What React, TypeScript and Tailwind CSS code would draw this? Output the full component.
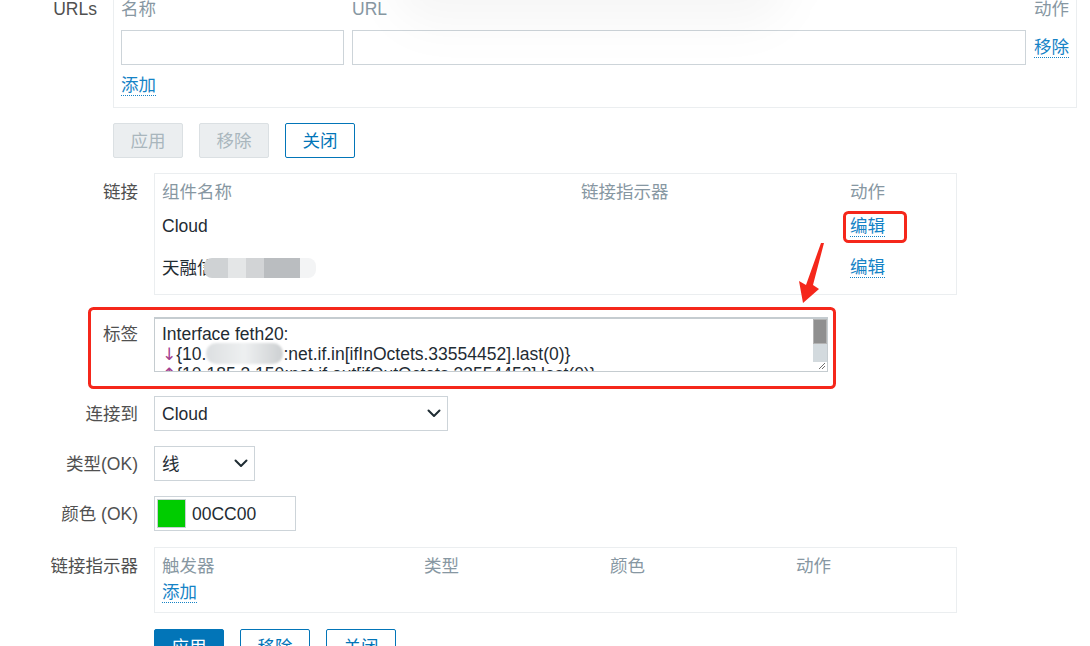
import { FC, ReactElement } from 'react';

const Chevron: FC = (): ReactElement => (
  <svg width="14" height="9" viewBox="0 0 14 9" fill="none">
    <polyline points="1.5,1.5 7,7 12.5,1.5" stroke="#1f2c33" strokeWidth="2" strokeLinecap="round" strokeLinejoin="round" />
  </svg>
);

const Link: FC<{ text: string }> = ({ text }): ReactElement => (
  <span className="inline-block leading-[20px] text-[#1583c6] border-b border-dotted border-[#1583c6]">{text}</span>
);

const Blur: FC = (): ReactElement => (
  <span className="inline-block align-middle w-[77px] h-[21px] -mt-[3px] rounded-[10px] bg-gradient-to-r from-[#dcdfe1] via-[#eef0f1] to-[#cdd0d2] blur-[1px]"></span>
);

export default function App(): ReactElement {
  return (
    <div className="relative w-[1090px] h-[646px] overflow-hidden bg-white text-[17.5px] leading-[20px] text-[#1f2c33] font-['Liberation_Sans','Noto_Sans_CJK_SC',sans-serif]">
      {/* URLs */}
      <div className="flex">
        <div className="w-[97px] shrink-0 text-right leading-[19px] text-[#505050]">URLs</div>
        <div className="ml-4 w-[964px] border-x border-b border-[#ebeef0] pl-[7px] pb-[11px]">
          <div className="grid grid-cols-[223px_674px_auto] gap-x-2 leading-[19px] text-[#8797a2]">
            <span>名称</span>
            <span>URL</span>
            <span>动作</span>
          </div>
          <div className="grid grid-cols-[223px_674px_auto] gap-x-2 mt-[11px] items-center">
            <div className="h-[35px] border border-[#cdd4d9]"></div>
            <div className="h-[35px] border border-[#cdd4d9]"></div>
            <div><Link text="移除" /></div>
          </div>
          <div className="mt-[10px]"><Link text="添加" /></div>
        </div>
      </div>

      <div className="flex gap-4 ml-[113px] mt-[15px]">
        <button className="w-[70px] h-[35px] rounded-[2px] bg-[#ebeef0] border border-[#dbe0e3] text-[#a9b6bd]">应用</button>
        <button className="w-[70px] h-[35px] rounded-[2px] bg-[#ebeef0] border border-[#dbe0e3] text-[#a9b6bd]">移除</button>
        <button className="w-[70px] h-[35px] rounded-[2px] bg-white border border-[#0275b8] text-[#0275b8]">关闭</button>
      </div>

      {/* 链接 */}
      <div className="flex mt-[15px]">
        <div className="w-[138px] shrink-0 text-right text-[#505050] pt-[9px]">链接</div>
        <div className="ml-4 w-[803px] border border-[#ebeef0] pl-[7px] pt-[8px] pb-[16px]">
          <div className="grid grid-cols-[419px_269px_auto] text-[#8797a2]">
            <span>组件名称</span>
            <span>链接指示器</span>
            <span>动作</span>
          </div>
          <div className="grid grid-cols-[419px_269px_auto] mt-[14px]">
            <span>Cloud</span>
            <span></span>
            <span><Link text="编辑" /></span>
          </div>
          <div className="grid grid-cols-[419px_269px_auto] mt-[20px]">
            <span className="flex items-center">
              天融信
              <span className="flex h-[20px] -ml-[11px]">
                <span className="w-[24px] bg-[#cfd2d4] rounded-l-[8px]"></span>
                <span className="w-[18px] bg-[#e4e6e7]"></span>
                <span className="w-[18px] bg-[#d2d4d6]"></span>
                <span className="w-[36px] bg-[#babdc0]"></span>
                <span className="w-[16px] bg-[#f3f4f5] rounded-r-[8px]"></span>
              </span>
            </span>
            <span></span>
            <span><Link text="编辑" /></span>
          </div>
        </div>
      </div>

      {/* 标签 */}
      <div className="flex mt-[22px]">
        <div className="w-[138px] shrink-0 text-right text-[#505050] pt-[7px]">标签</div>
        <div className="ml-4 w-[674px] h-[55px] border border-[#c5ccd0] border-t-2 flex">
          <div className="flex-1 overflow-hidden pl-[7px] pt-[5px] leading-[20px] whitespace-nowrap">
            <div>Interface feth20:</div>
            <div><span className="text-[#a3418f] font-['DejaVu_Sans',sans-serif] text-[17px]">↓</span>{'{10.'}<Blur />{':net.if.in[ifInOctets.33554452].last(0)}'}</div>
            <div><span className="text-[#a3418f] font-['DejaVu_Sans',sans-serif] text-[17px]">↑</span>{'{10.185.3.150:net.if.out[ifOutOctets.33554452].last(0)}'}</div>
          </div>
          <div className="w-[14px] flex flex-col">
            <div className="h-[25px] bg-[#8f8f8f] border border-[#b3b3b3]"></div>
            <div className="h-[18px] bg-[#d3dade]"></div>
            <div className="flex-1 bg-white flex items-end justify-end pr-[1px] pb-[1px]">
              <svg width="8" height="8" viewBox="0 0 8 8">
                <line x1="7" y1="1" x2="1" y2="7" stroke="#707070" strokeWidth="1" />
                <line x1="7" y1="4" x2="4" y2="7" stroke="#707070" strokeWidth="1" />
              </svg>
            </div>
          </div>
        </div>
      </div>

      {/* 连接到 */}
      <div className="flex items-center mt-[24px]">
        <div className="w-[138px] shrink-0 text-right text-[#505050]">连接到</div>
        <div className="ml-4 w-[294px] h-[35px] border border-[#cdd4d9] flex items-center justify-between pl-[7px] pr-[6px]">
          <span>Cloud</span>
          <Chevron />
        </div>
      </div>

      {/* 类型 */}
      <div className="flex items-center mt-[15px]">
        <div className="w-[138px] shrink-0 text-right text-[#505050]">类型(OK)</div>
        <div className="ml-4 w-[101px] h-[35px] border border-[#cdd4d9] flex items-center justify-between pl-[7px] pr-[6px]">
          <span>线</span>
          <Chevron />
        </div>
      </div>

      {/* 颜色 */}
      <div className="flex items-center mt-[15px]">
        <div className="w-[138px] shrink-0 text-right text-[#505050]">颜色 (OK)</div>
        <div className="ml-4 w-[142px] h-[35px] border border-[#cdd4d9] flex items-center pl-[2px] gap-[6px]">
          <span className="w-[29px] h-[29px] bg-[#00cc00] border border-[#c8cfd3]"></span>
          <span>00CC00</span>
        </div>
      </div>

      {/* 链接指示器 */}
      <div className="flex mt-[16px]">
        <div className="w-[138px] shrink-0 text-right text-[#505050] pt-[9px]">链接指示器</div>
        <div className="ml-4 w-[803px] h-[66px] border border-[#ebeef0] pl-[7px] pt-[8px]">
          <div className="grid grid-cols-[262px_186px_186px_auto] text-[#8797a2]">
            <span>触发器</span>
            <span>类型</span>
            <span>颜色</span>
            <span>动作</span>
          </div>
          <div className="mt-[6px]"><Link text="添加" /></div>
        </div>
      </div>

      <div className="flex gap-4 ml-[154px] mt-[16px]">
        <button className="w-[70px] h-[35px] rounded-[2px] bg-[#0275b8] border border-[#0275b8] text-white">应用</button>
        <button className="w-[70px] h-[35px] rounded-[2px] bg-white border border-[#0275b8] text-[#0275b8]">移除</button>
        <button className="w-[70px] h-[35px] rounded-[2px] bg-white border border-[#0275b8] text-[#0275b8]">关闭</button>
      </div>

      {/* faint shadow of a popup above */}
      <div className="absolute left-[390px] -top-[70px] w-[400px] h-[95px] rounded-full bg-black/[0.035] blur-[22px] pointer-events-none"></div>

      {/* annotations */}
      <svg className="absolute inset-0 pointer-events-none" width="1090" height="646" viewBox="0 0 1090 646">
        <rect x="844.5" y="212.5" width="61" height="29" rx="4" fill="none" stroke="#f5271b" strokeWidth="3" />
        <rect x="89.5" y="308.5" width="745" height="79" rx="4" fill="none" stroke="#f5271b" strokeWidth="3" />
        <polygon points="824,243 813,285 819,289 803,303 799,281 806,285 821,243" fill="#f5271b" />
      </svg>
    </div>
  );
}
